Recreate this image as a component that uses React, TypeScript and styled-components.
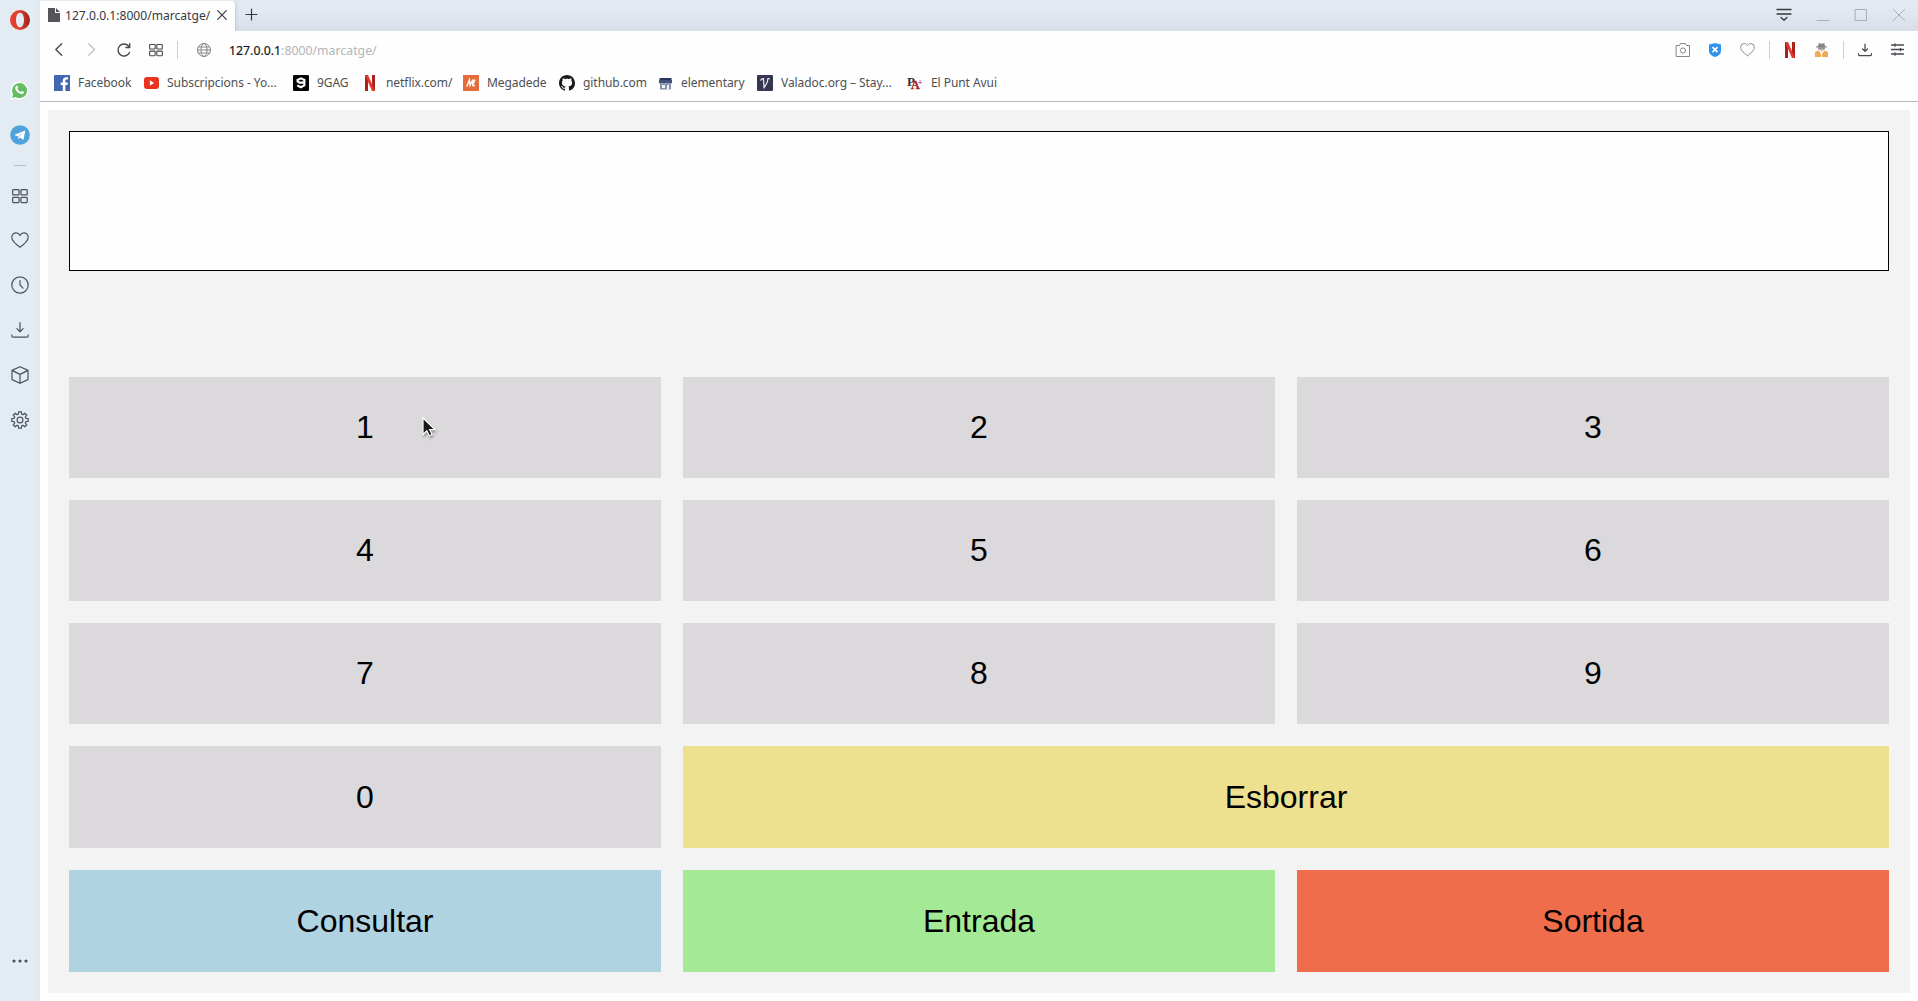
import React from 'react';
import styled, { createGlobalStyle } from 'styled-components';

const Global = createGlobalStyle`
  * { box-sizing: border-box; }
  html, body { margin: 0; padding: 0; background: #fefefe; }
  button { font: inherit; border: 0; padding: 0; background: none; color: inherit; }
  svg { display: block; flex: none; overflow: visible; }
`;

const Browser = styled.div`
  display: flex;
  width: 1918px;
  height: 1001px;
  overflow: hidden;
  font-family: 'Noto Sans', 'Open Sans', sans-serif;
  background: #fefefe;
`;

const Sidebar = styled.aside`
  width: 40px;
  padding-top: 1px;
  display: flex;
  flex-direction: column;
  background: linear-gradient(90deg, #e3ebf3 0 35px, #dfe8f1 37px 40px);
  color: #4b525c;
`;

const SideItem = styled.div<{ $h?: number; $push?: boolean; $logo?: boolean }>`
  display: flex;
  align-items: center;
  justify-content: center;
  width: ${p => (p.$logo ? 40 : 39)}px;
  height: ${p => p.$h ?? 45}px;
  flex: none;
  margin-top: ${p => (p.$push ? 'auto' : '0')};
`;

const SideSpacer = styled.div`
  height: 28px;
  flex: none;
`;

const SideRule = styled.div`
  width: 12px;
  height: 1px;
  background: #b3bdc8;
`;

const Main = styled.div`
  flex: 1;
  min-width: 0;
  display: flex;
  flex-direction: column;
`;

const TabBar = styled.div`
  display: flex;
  align-items: stretch;
  height: 31px;
  background: linear-gradient(#e3ebf3 0, #e1e8f0 13px, #d9dee8 30px);
  color: #35393e;
`;

const Tab = styled.div`
  display: flex;
  align-items: center;
  width: 195px;
  margin-top: 1px;
  padding: 0 0 2px 8px;
  background: #fefefe;
  border-radius: 0 3px 0 0;
  box-shadow: 1px 0 3px rgba(120, 135, 160, 0.3);
  clip-path: inset(0 -4px 0 0);
`;

const TabTitle = styled.span`
  width: 144px;
  margin: 1px 8px 0 5px;
  font-size: 12.1px;
  line-height: 18px;
  white-space: nowrap;
`;

const NewTab = styled.div`
  display: flex;
  align-items: center;
  padding: 0 0 2px 11px;
`;

const WindowControls = styled.div`
  display: flex;
  align-items: center;
  margin-left: auto;
  padding: 0 13px 1px 0;
  color: #a9adb4;
`;

const Gap = styled.div<{ $w: number }>`
  width: ${p => p.$w}px;
  flex: none;
`;

const AddressBar = styled.div`
  display: flex;
  align-items: center;
  height: 36px;
  padding: 1px 14px 0 15px;
  color: #45494d;
`;

const Divider = styled.div`
  width: 1px;
  height: 18px;
  background: #cfcfd1;
`;

const Url = styled.div`
  flex: 1;
  padding-top: 3px;
  font-size: 12.3px;
  line-height: 18px;
  color: #b4b4b6;
  b { font-weight: 400; color: #17181a; -webkit-text-stroke: 0.2px #17181a; }
`;

const Bookmarks = styled.nav`
  display: flex;
  height: 34px;
  padding: 7px 0 0 14px;
  color: #4d5053;
`;

const Bookmark = styled.div<{ $w: number; $gap: number }>`
  display: flex;
  align-items: center;
  gap: ${p => p.$gap}px;
  width: ${p => p.$w}px;
  height: 18px;
  flex: none;
  font-size: 12px;
  letter-spacing: -0.06px;
  white-space: nowrap;
`;

const BookmarkLabel = styled.span`
  padding-bottom: 2px;
`;

const PageView = styled.main`
  flex: 1;
  border-top: 1px solid #b3b8c1;
  padding: 8px;
  background: #fefefe;
`;

const Terminal = styled.section`
  display: flex;
  flex-direction: column;
  height: 883px;
  padding: 21px;
  background: #f3f3f3;
  font-family: 'Liberation Sans', Arial, sans-serif;
`;

const Display = styled.output`
  display: block;
  height: 140px;
  margin-bottom: 106px;
  background: #fefefe;
  border: 1px solid #000;
`;

const Keypad = styled.div`
  flex: 1;
  display: grid;
  grid-template-columns: repeat(3, 1fr);
  grid-template-rows: repeat(3, 101px) repeat(2, 102px);
  gap: 22px;
`;

const Key = styled.button<{ $color?: string; $wide?: boolean }>`
  grid-column: ${p => (p.$wide ? 'span 2' : 'auto')};
  padding-bottom: 1px;
  background: ${p => p.$color ?? '#dbd9dc'};
  color: #000;
  font-size: 32px;
  line-height: 36px;
`;

const Cursor = styled.div`
  position: absolute;
  left: 422px;
  top: 417px;
  filter: drop-shadow(1px 2px 1px rgba(0, 0, 0, 0.3));
`;

type IconProps = { s?: number; w?: number; c?: string; children: React.ReactNode; box?: number };
const Icon = ({ s = 18, w = 1.2, c = 'currentColor', box = 18, children }: IconProps) => (
  <svg width={s} height={s} viewBox={`0 0 ${box} ${box}`} fill="none" stroke={c} strokeWidth={w} strokeLinecap="round" strokeLinejoin="round">
    {children}
  </svg>
);

const OperaLogo = () => (
  <svg width="20" height="20" viewBox="0 0 20 20">
    <defs>
      <linearGradient id="opera" x1="0" x2="1">
        <stop offset="0.45" stopColor="#e5402f" />
        <stop offset="1" stopColor="#98231c" />
      </linearGradient>
    </defs>
    <path fillRule="evenodd" fill="url(#opera)" d="M10 0a10 10 0 1 0 0 20a10 10 0 1 0 0-20zM10 2.700c2.500 0 4 3.200 4 7.300s-1.500 7.300-4 7.300S6 14.100 6 10s1.500-7.300 4-7.300z" />
  </svg>
);

const WhatsApp = () => (
  <svg width="19" height="19" viewBox="0 0 19 19">
    <path d="M1 18l1.300-4.600A8.200 8.200 0 1 1 5.700 16.800z" fill="#64bd62" stroke="#fbfdfb" strokeWidth="1.400" />
    <path d="M6.200 4.900c.5-.4 1.100-.3 1.300.2l.7 1.600c.1.500-.8 1.100-.7 1.400.6 1.300 1.700 2.200 3 2.800.5.200 1-1.100 1.500-.9l1.700.8c.5.400.1 1.400-.4 1.800-1.200 1-3.200.4-4.900-.8-1.800-1.300-3.300-3.200-3.200-4.900 0-.8.400-1.500 1-2z" fill="#fff" />
  </svg>
);

const Telegram = () => (
  <svg width="20" height="20" viewBox="0 0 20 20">
    <circle cx="10" cy="10" r="9.800" fill="#4fa3dc" />
    <path d="M4 10.100L15.300 5.400 13.400 15 10 12.500l-1.700 1.800-.5-3z" fill="#fff" />
    <path d="M7.800 11.300l5.600-4-4.200 4.700-.9 2.300z" fill="#b9d8ec" />
  </svg>
);

const GridIcon = ({ s = 16 }: { s?: number }) => (
  <Icon s={s} box={16} w={1.25}>
    {[[0.7, 1.7], [8.9, 1.7], [0.7, 9.3], [8.9, 9.3]].map(([x, y]) => (
      <rect key={`${x}-${y}`} x={x} y={y} width="6.300" height="5.200" rx="0.700" />
    ))}
  </Icon>
);

const Heart = ({ s = 18, c }: { s?: number; c?: string }) => (
  <Icon s={s} c={c} w={1.15}>
    <path d="M9 16.300C5.500 13.800.8 10.300.8 6.300a4.300 4.300 0 0 1 4.300-4.400c1.800 0 3.100 1 3.900 2.500.8-1.500 2.100-2.500 3.900-2.500a4.300 4.300 0 0 1 4.300 4.400c0 4-4.700 7.500-8.200 10z" />
  </Icon>
);

const Download = ({ s = 18 }: { s?: number }) => (
  <Icon s={s} w={s < 18 ? 1.6 : 1.2}>
    <path d="M9 1.500v9M5.900 7.700L9 10.800l3.100-3.100M.8 13.800v1.300q0 1.100 1.100 1.100h14.200q1.100 0 1.100-1.100v-1.300" />
  </Icon>
);

const Netflix = () => (
  <svg width="10" height="16" viewBox="0 0 10 16">
    <path d="M0 0h3v16H0zM7 0h3v16H7z" fill="#a9211c" />
    <path d="M0 0h3l7 16H7z" fill="#e5372b" />
  </svg>
);

const Facebook = () => (
  <svg width="16" height="16" viewBox="0 0 16 16">
    <rect width="16" height="16" rx="0.600" fill="#4267b0" />
    <path d="M8.800 16V10H6.700V7.500h2.100V5.700c0-2.200 1.300-3.400 3.300-3.400.9 0 1.500.1 1.900.1v2.200h-1.300c-1.100 0-1.300.5-1.300 1.300v1.600h2.500l-.4 2.500h-2.100v6z" fill="#fff" />
  </svg>
);

const YouTube = () => (
  <svg width="15" height="12" viewBox="0 0 15 12">
    <rect width="15" height="12" rx="3" fill="#e9321f" />
    <path d="M5.900 3.300L10.200 6l-4.300 2.600z" fill="#fff" />
  </svg>
);

const NineGag = () => (
  <svg width="16" height="16" viewBox="0 0 16 16">
    <rect width="16" height="16" rx="1.200" fill="#050505" />
    <path d="M11.200 7.600H6.500L4.600 6.500V5L8 3.400 11.400 5v5.200L8 12.200l-3.700-1.700" fill="none" stroke="#fff" strokeWidth="2.100" />
  </svg>
);

const Megadede = () => (
  <svg width="16" height="16" viewBox="0 0 16 16">
    <rect width="16" height="16" fill="#e56d3c" />
    <path d="M3.700 11.500L6.500 5l.6 5.300L10 4.500l-.3 5.600q.3 1.400 2.200-.1M9.500 10.500L12 4.500" fill="none" stroke="#fff" strokeWidth="1.400" />
  </svg>
);

const GitHub = () => (
  <svg width="16" height="16" viewBox="0 0 16 16" fill="#181a1c">
    <path d="M8 0C3.580 0 0 3.580 0 8c0 3.540 2.290 6.530 5.470 7.590.4.070.55-.17.55-.38 0-.19-.01-.82-.01-1.490-2.010.37-2.530-.49-2.690-.94-.09-.23-.48-.94-.82-1.130-.28-.15-.68-.52-.01-.53.63-.01 1.080.58 1.230.82.72 1.210 1.870.87 2.330.66.070-.52.28-.87.510-1.070-1.780-.2-3.640-.89-3.640-3.950 0-.87.310-1.590.82-2.150-.08-.2-.36-1.020.08-2.120 0 0 .67-.21 2.200.82.640-.18 1.320-.27 2-.27s1.360.09 2 .27c1.530-1.040 2.200-.82 2.200-.82.440 1.100.16 1.920.08 2.120.51.56.82 1.270.82 2.150 0 3.070-1.870 3.750-3.650 3.950.29.25.54.73.54 1.480 0 1.070-.01 1.930-.01 2.200 0 .21.150.46.550.38A8.010 8.010 0 0 0 16 8c0-4.420-3.580-8-8-8z" />
  </svg>
);

const Elementary = () => (
  <svg width="13" height="13" viewBox="0 0 13 13">
    <path d="M.5 1h12v2H.5z" fill="#26365d" />
    <path d="M0 3h13v3q-1.500 1.200-3 0-1.700 1.200-3.500 0-1.700 1.200-3.500 0-1.500 1.200-3 0z" fill="#405078" />
    <path d="M1 6.500h11v6H1z" fill="#8791ad" />
    <path d="M3 8h3v3H3zM8 8h2v4.500H8z" fill="#f7f8fb" />
  </svg>
);

const Valadoc = () => (
  <svg width="16" height="16" viewBox="0 0 16 16">
    <rect width="16" height="16" rx="1" fill="#373650" />
    <path d="M3.600 5.700q.4-2 2.900-2l.5 8.800q4.100-5 3.700-8.600 1.200-.5 2 .2" fill="none" stroke="#ededf4" strokeWidth="1.200" />
  </svg>
);

const PuntMark = styled.span`
  display: flex;
  align-items: flex-start;
  width: 16px;
  height: 18px;
  font-family: 'Liberation Serif', serif;
  font-weight: 700;
  b { font-size: 13px; line-height: 15px; color: #3b3034; }
  i { margin: 4px 0 0 -4px; font-size: 12px; line-height: 14px; font-style: normal; color: #b4231e; -webkit-text-stroke: 0.4px #b4231e; }
  u { margin: 3px 0 0 -2px; font-size: 9px; line-height: 10px; text-decoration: none; color: #b4231e; }
`;

const bookmarks = [
  { label: 'Facebook', icon: <Facebook />, w: 90, gap: 8 },
  { label: 'Subscripcions - Yo...', icon: <YouTube />, w: 149, gap: 8 },
  { label: '9GAG', icon: <NineGag />, w: 72, gap: 8 },
  { label: 'netflix.com/', icon: <Netflix />, w: 98, gap: 11 },
  { label: 'Megadede', icon: <Megadede />, w: 96, gap: 8 },
  { label: 'github.com', icon: <GitHub />, w: 100, gap: 8 },
  { label: 'elementary', icon: <Elementary />, w: 98, gap: 9 },
  { label: 'Valadoc.org – Stay...', icon: <Valadoc />, w: 150, gap: 8 },
  { label: 'El Punt Avui', icon: <PuntMark><b>P</b><i>A</i><u>+</u></PuntMark>, w: 110, gap: 8 },
];

const keys: { label: string; color?: string; wide?: boolean }[] = [
  ...['1', '2', '3', '4', '5', '6', '7', '8', '9', '0'].map(label => ({ label })),
  { label: 'Esborrar', color: '#ede18f', wide: true },
  { label: 'Consultar', color: '#b0d3e2' },
  { label: 'Entrada', color: '#a3e996' },
  { label: 'Sortida', color: '#f06d4c' },
];

const gear = (() => {
  const points: string[] = [];
  for (let i = 0; i < 8; i++) {
    [[-0.27, 6.1], [-0.17, 8.3], [0.17, 8.3], [0.27, 6.1]].forEach(([a, r]) => {
      const t = (i * Math.PI) / 4 + a;
      points.push(`${(9 + r * Math.sin(t)).toFixed(2)} ${(9 - r * Math.cos(t)).toFixed(2)}`);
    });
  }
  return `M${points.join('L')}Z`;
})();

export default function App() {
  return (
    <>
      <Global />
      <Browser>
        <Sidebar>
          <SideItem $logo $h={38}><OperaLogo /></SideItem>
          <SideSpacer />
          <SideItem $h={46}><WhatsApp /></SideItem>
          <SideItem $logo $h={44}><Telegram /></SideItem>
          <SideItem $logo $h={16}><SideRule /></SideItem>
          <SideItem><GridIcon /></SideItem>
          <SideItem $h={44}><Heart /></SideItem>
          <SideItem $h={46}><Icon><circle cx="9" cy="9" r="8.200" /><path d="M9 4.500V9l3 3.200" /></Icon></SideItem>
          <SideItem $h={44}><Download /></SideItem>
          <SideItem $h={46}><Icon><path d="M9 .700l8 3.700v9.200l-8 3.700-8-3.700V4.400zM1 4.400l8 4 8-4M9 8.400v8.900" /></Icon></SideItem>
          <SideItem $h={44}><Icon><path d={gear} /><circle cx="9" cy="9" r="2.900" /></Icon></SideItem>
          <SideItem $push $logo $h={80}>
            <Icon><g fill="currentColor" stroke="none"><circle cx="3" cy="9" r="1.600" /><circle cx="9" cy="9" r="1.600" /><circle cx="15" cy="9" r="1.600" /></g></Icon>
          </SideItem>
        </Sidebar>
        <Main>
          <TabBar>
            <Tab>
              <svg width="12" height="14" viewBox="0 0 12 14"><path d="M0 0h7v5h5v9H0z" fill="#55565a" /><path d="M8 0l4 4H8z" fill="#55565a" /></svg>
              <TabTitle>127.0.0.1:8000/marcatge/</TabTitle>
              <Icon s={10} box={10}><path d="M.7.700l8.600 8.600M9.300.700L.7 9.300" /></Icon>
            </Tab>
            <NewTab><Icon s={11} box={11}><path d="M5.500 0v11M0 5.500h11" /></Icon></NewTab>
            <WindowControls>
              <Icon s={14} box={14} c="#35393e" w={1.3}><path d="M0 1.500h14M0 6h14M4 9.500l3 2.700 3-2.700" /></Icon>
              <Gap $w={26} />
              <Icon s={12} box={12} w={1}><path d="M0 11.500h12" /></Icon>
              <Gap $w={26} />
              <Icon s={12} box={12} w={1}><path d="M.5.500h11v11H.5z" /></Icon>
              <Gap $w={26} />
              <Icon s={12} box={12} w={1}><path d="M.3.300l11.400 11.400M11.700.300L.3 11.700" /></Icon>
            </WindowControls>
          </TabBar>
          <AddressBar>
            <Icon s={14} box={14} w={1.4}><path d="M6.700.8L.8 6.500l5.900 5.700" /></Icon>
            <Gap $w={19} />
            <Icon s={14} box={14} w={1.2} c="#bcbec0"><path d="M.6.800l6 5.700-6 5.700" /></Icon>
            <Gap $w={15} />
            <Icon s={14} box={14} w={1.4}><path d="M12.500 9.500A6 6 0 1 1 11.500 3M12.700.800v3.700H9" /></Icon>
            <Gap $w={18} />
            <GridIcon s={14} />
            <Gap $w={14} />
            <Divider />
            <Gap $w={19} />
            <Icon s={14} box={14} w={1} c="#858789"><circle cx="7" cy="7" r="6.500" /><ellipse cx="7" cy="7" rx="3" ry="6.500" /><path d="M1.300 4h11.400M.5 7h13M1.300 10h11.400" /></Icon>
            <Gap $w={18} />
            <Url><b>127.0.0.1</b>:8000/marcatge/</Url>
            <Icon s={14} box={14} w={1} c="#858789"><path d="M.5 2.500h3l1-2h5l1 2h3v11H.5z" /><circle cx="7" cy="7.500" r="2.600" /></Icon>
            <Gap $w={19} />
            <svg width="12" height="14" viewBox="0 0 12 14"><path d="M6 0l6 1.500V8q0 4-6 6-6-2-6-6V1.500z" fill="#3193ed" /><path d="M3.500 4.200l5 5M8.500 4.200l-5 5" stroke="#fff" strokeWidth="1.700" /></svg>
            <Gap $w={19} />
            <Heart s={15} c="#858789" />
            <Gap $w={14} />
            <Divider />
            <Gap $w={15} />
            <Netflix />
            <Gap $w={20} />
            <svg width="13" height="14" viewBox="0 0 13 14">
              <path d="M3.800 0q2.700 1.300 5.400 0l1 3.200h1.600v1.200H1.200V3.200h1.600z" fill="#85878b" />
              <path d="M3 4h7v2L6.500 8.500 3 6z" fill="#94969a" />
              <path d="M4 6.500h5L6.500 9z" fill="#f2d3ad" />
              <path d="M0 12V9l3.500-1.500L6 11v3H0zM13 12V9L9.500 7.500 7 11v3h6z" fill="#f0a954" />
            </svg>
            <Gap $w={15} />
            <Divider />
            <Gap $w={14} />
            <Download s={14} />
            <Gap $w={19} />
            <Icon s={13} box={13} w={1.3}><path d="M.5 2h12M.5 6.500h12M.5 11h12M4 .8v2.400M9.500 5.300v2.400M4 9.800v2.400" /></Icon>
          </AddressBar>
          <Bookmarks>
            {bookmarks.map(b => (
              <Bookmark key={b.label} $w={b.w} $gap={b.gap}>{b.icon}<BookmarkLabel>{b.label}</BookmarkLabel></Bookmark>
            ))}
          </Bookmarks>
          <PageView>
            <Terminal>
              <Display />
              <Keypad>
                {keys.map(k => <Key key={k.label} $color={k.color} $wide={k.wide}>{k.label}</Key>)}
              </Keypad>
            </Terminal>
          </PageView>
        </Main>
        <Cursor>
          <svg width="14" height="20" viewBox="0 0 14 20"><path d="M1 1v16.500l3.800-3.700 2.500 5 2.800-1.300-2.400-4.800h5.500z" fill="#171819" stroke="#fff" strokeWidth="1.200" /></svg>
        </Cursor>
      </Browser>
    </>
  );
}
